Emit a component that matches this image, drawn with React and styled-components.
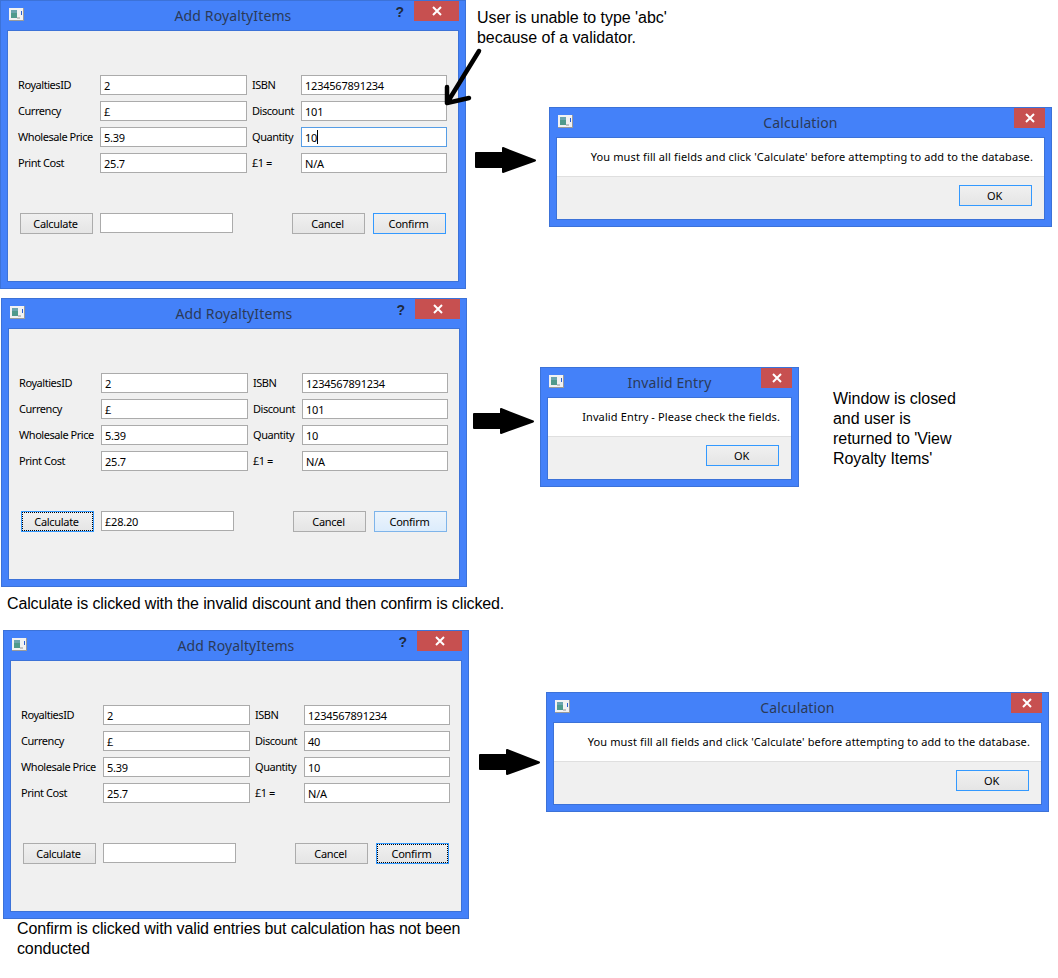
import styled, { createGlobalStyle } from "styled-components";

const uiFont = `"Noto Sans", Tahoma, sans-serif`;

const rowsFirst = [
  ["RoyaltiesID", "2", "ISBN", "1234567891234"],
  ["Currency", "£", "Discount", "101"],
  ["Wholesale Price", "5.39", "Quantity", "10"],
  ["Print Cost", "25.7", "£1 =", "N/A"],
];

const rowsLast = [
  ["RoyaltiesID", "2", "ISBN", "1234567891234"],
  ["Currency", "£", "Discount", "40"],
  ["Wholesale Price", "5.39", "Quantity", "10"],
  ["Print Cost", "25.7", "£1 =", "N/A"],
];

const fillAllFields =
  "You must fill all fields and click 'Calculate' before attempting to add to the database.";

function WindowIcon() {
  return (
    <IconSvg width="15" height="13" viewBox="0 0 15 13">
      <rect x="0" y="0" width="15" height="13" fill="#9a9a9a" />
      <rect x="0" y="0" width="14" height="12" fill="#f2f2f2" />
      <rect x="2" y="2" width="6" height="8" fill="#4f9a8c" />
      <rect x="2" y="2" width="6" height="3" fill="#6ba5ae" />
      <rect x="12" y="3" width="1" height="4" fill="#2a5fd0" />
      <rect x="8" y="9" width="3" height="2" fill="#c4c4c4" />
    </IconSvg>
  );
}

function CloseIcon() {
  return (
    <svg width="10" height="10" viewBox="0 0 10 10">
      <path d="M1 1 L9 9 M9 1 L1 9" stroke="#fff" strokeWidth="2" fill="none" />
    </svg>
  );
}

function TitleBar({ title, help }) {
  return (
    <Bar>
      <BarStart>
        <WindowIcon />
      </BarStart>
      <Title>{title}</Title>
      <BarEnd>
        {help && <HelpMark>?</HelpMark>}
        <CloseBtn $wide={help}>
          <CloseIcon />
        </CloseBtn>
      </BarEnd>
    </Bar>
  );
}

function FormWindow({ x, y, rows, total, focusQuantity, calculate, confirm }) {
  return (
    <Frame $x={x} $y={y} $w={466} $h={289}>
      <TitleBar title="Add RoyaltyItems" help />
      <Client>
        <FieldGrid>
          {rows.map(([labelA, valueA, labelB, valueB]) => (
            <FieldRow key={labelA}>
              <FieldLabel>{labelA}</FieldLabel>
              <Field>{valueA}</Field>
              <FieldLabel $indent>{labelB}</FieldLabel>
              <Field $focus={focusQuantity && labelB === "Quantity"}>
                {valueB}
                {focusQuantity && labelB === "Quantity" && <Caret />}
              </Field>
            </FieldRow>
          ))}
        </FieldGrid>
        <ActionRow>
          <Btn $state={calculate}>Calculate</Btn>
          <TotalField>{total}</TotalField>
          <Spacer />
          <Btn>Cancel</Btn>
          <Btn $state={confirm}>Confirm</Btn>
        </ActionRow>
      </Client>
    </Frame>
  );
}

function MessageWindow({ x, y, w, title, message }) {
  return (
    <Frame $x={x} $y={y} $w={w} $h={120}>
      <TitleBar title={title} />
      <Client>
        <Message>{message}</Message>
        <DialogFoot>
          <Btn $state="default">OK</Btn>
        </DialogFoot>
      </Client>
    </Frame>
  );
}

function BigArrow({ x, y }) {
  return (
    <ArrowSvg $x={x} $y={y} width="64" height="30" viewBox="0 0 64 30">
      <path
        d="M2 7 L29 7 L29 2 L61 14.5 L29 26 L29 21 L2 21 Z"
        fill="#000"
        stroke="#000"
        strokeWidth="2"
        strokeLinejoin="round"
      />
    </ArrowSvg>
  );
}

function HandArrow() {
  return (
    <ArrowSvg $x={440} $y={44} width="46" height="66" viewBox="0 0 46 66">
      <path
        d="M39 7 L7 59 M7 43 L7 59 L29 54"
        fill="none"
        stroke="#000"
        strokeWidth="4.5"
        strokeLinecap="round"
        strokeLinejoin="round"
      />
    </ArrowSvg>
  );
}

export default function App() {
  return (
    <Canvas>
      <GlobalStyle />

      <FormWindow x={0} y={0} rows={rowsFirst} focusQuantity confirm="default" />
      <Note $x={477} $y={8}>
        User is unable to type 'abc'
        <br />
        because of a validator.
      </Note>
      <HandArrow />
      <BigArrow x={474} y={146} />
      <MessageWindow x={549} y={107} w={503} title="Calculation" message={fillAllFields} />

      <FormWindow x={1} y={298} rows={rowsFirst} total="£28.20" calculate="focus" confirm="hover" />
      <BigArrow x={472} y={407} />
      <MessageWindow
        x={540}
        y={367}
        w={259}
        title="Invalid Entry"
        message="Invalid Entry - Please check the fields."
      />
      <Note $x={833} $y={389}>
        Window is closed
        <br />
        and user is
        <br />
        returned to 'View
        <br />
        Royalty Items'
      </Note>
      <Note $x={7} $y={594} $tight>
        Calculate is clicked with the invalid discount and then confirm is clicked.
      </Note>

      <FormWindow x={3} y={630} rows={rowsLast} confirm="focus" />
      <BigArrow x={478} y={748} />
      <MessageWindow x={546} y={692} w={503} title="Calculation" message={fillAllFields} />
      <Note $x={17} $y={919} $tight>
        Confirm is clicked with valid entries but calculation has not been
        <br />
        conducted
      </Note>
    </Canvas>
  );
}

const GlobalStyle = createGlobalStyle`
  html, body {
    margin: 0;
    background: #fff;
  }
  * {
    box-sizing: border-box;
  }
`;

const Canvas = styled.div`
  position: relative;
  width: 1058px;
  height: 978px;
  overflow: hidden;
  background: #fff;
`;

const Note = styled.div`
  position: absolute;
  left: ${(p) => p.$x}px;
  top: ${(p) => p.$y}px;
  font: 16px/20px "Liberation Sans", Arial, sans-serif;
  letter-spacing: ${(p) => (p.$tight ? -0.13 : -0.05)}px;
  color: #000;
  white-space: nowrap;
`;

const ArrowSvg = styled.svg`
  position: absolute;
  left: ${(p) => p.$x}px;
  top: ${(p) => p.$y}px;
`;

const Frame = styled.div`
  position: absolute;
  left: ${(p) => p.$x}px;
  top: ${(p) => p.$y}px;
  width: ${(p) => p.$w}px;
  height: ${(p) => p.$h}px;
  display: flex;
  flex-direction: column;
  padding: 0 6px 6px;
  background: #4481f9;
  border: 1px solid #3c72d8;
  font-family: ${uiFont};
`;

const Bar = styled.div`
  flex: none;
  height: 29px;
  display: grid;
  grid-template-columns: 1fr auto 1fr;
`;

const BarStart = styled.div`
  display: flex;
  align-items: flex-start;
  padding: 7px 0 0 2px;
`;

const BarEnd = styled.div`
  display: flex;
  align-items: flex-start;
  justify-content: flex-end;
`;

const IconSvg = styled.svg`
  display: block;
`;

const Title = styled.div`
  font-size: 14px;
  letter-spacing: 0.12px;
  line-height: 29px;
  color: #2b3a58;
`;

const HelpMark = styled.span`
  margin: 2px 10px 0 0;
  font: bold 14px/18px "Liberation Sans", Arial, sans-serif;
  color: #1f2a3d;
`;

const CloseBtn = styled.div`
  width: ${(p) => (p.$wide ? 45 : 31)}px;
  height: 20px;
  display: flex;
  align-items: center;
  justify-content: center;
  background: #c75050;
`;

const Client = styled.div`
  flex: 1;
  display: flex;
  flex-direction: column;
  background: #f0f0f0;
  border: 1px solid #3c72d8;
`;

const FieldGrid = styled.div`
  display: grid;
  row-gap: 6px;
  padding: 44px 11px 0 10px;
`;

const FieldRow = styled.div`
  display: grid;
  grid-template-columns: 82px 147px 54px 146px;
  height: 20px;
  align-items: center;
`;

const FieldLabel = styled.span`
  padding-left: ${(p) => (p.$indent ? 5 : 0)}px;
  font-size: 11px;
  letter-spacing: -0.45px;
  line-height: 16px;
  color: #000;
  white-space: nowrap;
`;

const Field = styled.div`
  height: 20px;
  padding-left: 3px;
  display: flex;
  align-items: center;
  font-size: 11px;
  letter-spacing: -0.22px;
  color: #000;
  background: #fff;
  border: 1px solid ${(p) => (p.$focus ? "#569de5" : "#ababab")};
`;

const Caret = styled.i`
  display: block;
  width: 1px;
  height: 14px;
  background: #000;
`;

const ActionRow = styled.div`
  display: flex;
  gap: 7px;
  margin-top: 40px;
  padding: 0 12px 0 12px;
`;

const Spacer = styled.div`
  flex: 1;
`;

const TotalField = styled(Field)`
  width: 133px;
`;

const Btn = styled.button`
  flex: none;
  width: 73px;
  height: 21px;
  padding: 0 2px 0 0;
  margin: 0;
  font-family: ${uiFont};
  font-size: 11px;
  letter-spacing: -0.3px;
  color: #000;
  border: 1px solid
    ${(p) =>
      p.$state === "hover" ? "#7eb4ea" : p.$state ? "#3399ff" : "#acacac"};
  background: ${(p) =>
    p.$state === "hover"
      ? "linear-gradient(#ecf4fc, #dcecfc)"
      : "linear-gradient(#f0f0f0, #e5e5e5)"};
  outline: ${(p) => (p.$state === "focus" ? "1px dotted #000" : "none")};
  outline-offset: -2px;

  & + & {
    margin-left: 1px;
  }
`;

const Message = styled.div`
  height: 39px;
  padding: 0 11px 2px 0;
  display: flex;
  align-items: center;
  justify-content: flex-end;
  font-size: 11px;
  letter-spacing: 0.125px;
  color: #000;
  background: #fff;
  border-bottom: 1px solid #dfdfdf;
  white-space: nowrap;
`;

const DialogFoot = styled.div`
  flex: 1;
  display: flex;
  justify-content: flex-end;
  padding: 8px 12px 0 0;
`;
